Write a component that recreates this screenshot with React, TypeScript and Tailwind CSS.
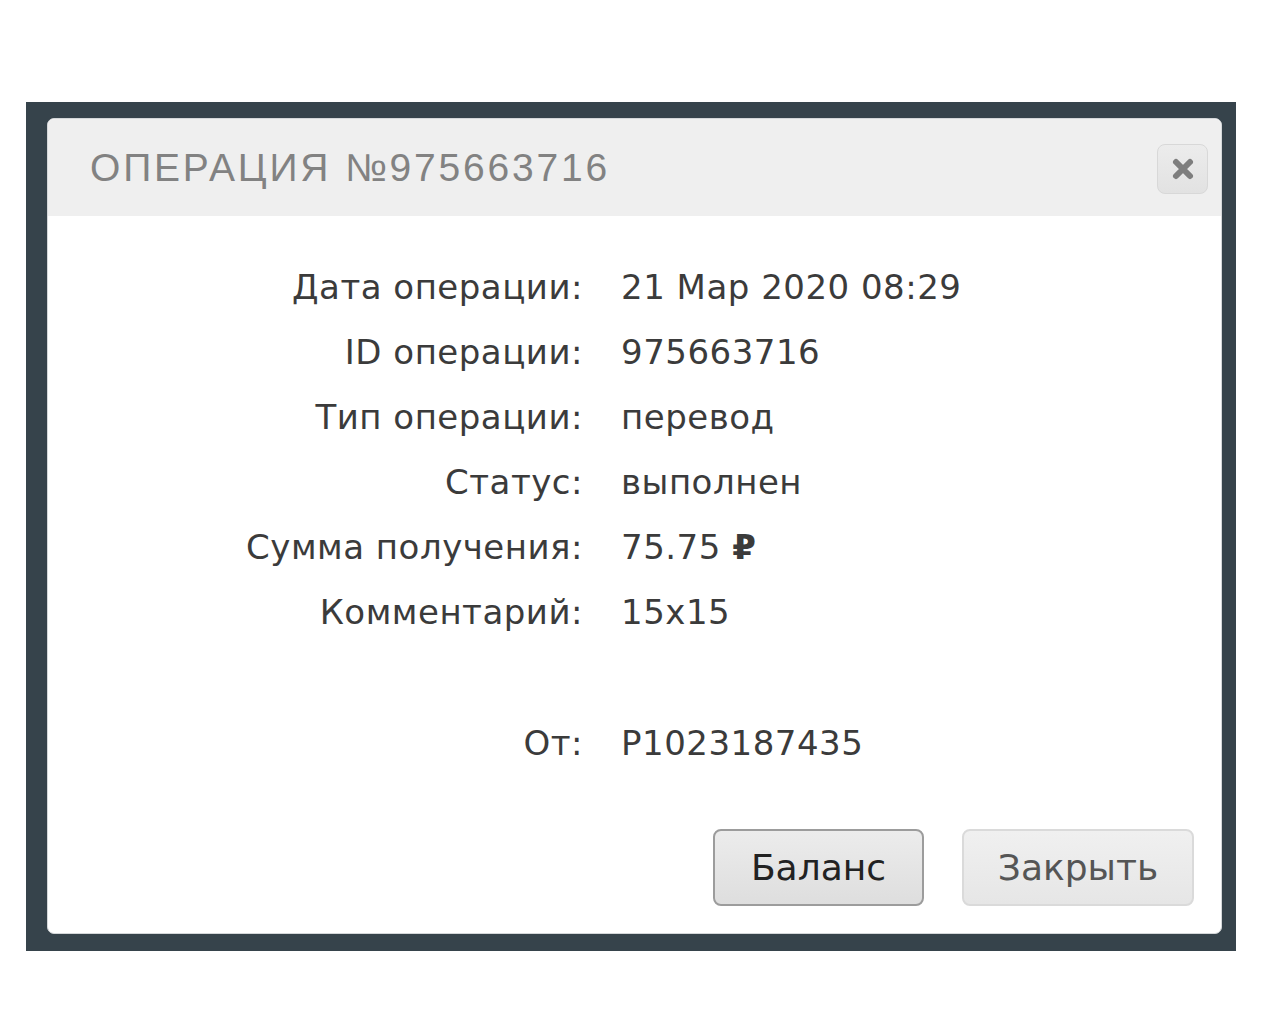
import React from "react"

const rows: [string, React.ReactNode][] = [
  ["Дата операции:", "21 Мар 2020 08:29"],
  ["ID операции:", "975663716"],
  ["Тип операции:", "перевод"],
  ["Статус:", "выполнен"],
  ["Сумма получения:", <>75.75 <span className="font-bold">₽</span></>],
  ["Комментарий:", "15x15"],
]

export default function App() {
  return (
    <div className="min-h-[1024px] w-[1280px] bg-white pt-[102px]">
      <div className="ml-[26px] w-[1210px] h-[849px] bg-[#36434b] pt-[16px] pl-[21px]">
        <div className="w-[1175px] h-[816px] bg-white rounded-[7px] border border-[#d4d7d9] overflow-hidden flex flex-col">
          <div className="h-[97px] bg-[#efefef] flex items-center justify-between pl-[42px] pr-[13px]">
            <h1
              className="text-[39px] tracking-[2.8px] text-[#828282] pt-[2px]"
              style={{ fontFamily: "'Liberation Sans', sans-serif" }}
            >
              ОПЕРАЦИЯ №975663716
            </h1>
            <button className="w-[51px] h-[50px] mt-[2px] rounded-[8px] border border-[#d8d8d8] bg-gradient-to-b from-[#ececec] to-[#e2e2e2] flex items-center justify-center">
              <svg width="24" height="24" viewBox="0 0 24 24">
                <path d="M5 5 L19 19 M19 5 L5 19" stroke="#7e7e7e" strokeWidth="6" strokeLinecap="round" />
              </svg>
            </button>
          </div>

          <div
            className="flex-1 flex flex-col text-[34px] tracking-[0.5px] text-[#3b3b3b]"
            style={{ fontFamily: "'DejaVu Sans', sans-serif" }}
          >
            <div className="pt-[39px] flex flex-col">
              {rows.map(([k, v]) => (
                <div key={k} className="flex h-[65px] items-center">
                  <div className="w-[535px] text-right">{k}</div>
                  <div className="pl-[38px]">{v}</div>
                </div>
              ))}
              <div className="flex h-[65px] items-center mt-[66px]">
                <div className="w-[535px] text-right">От:</div>
                <div className="pl-[38px]">P1023187435</div>
              </div>
            </div>

            <div className="mt-auto mb-[27px] flex justify-end gap-[38px] pr-[27px] text-[36px] tracking-normal">
              <button className="w-[211px] h-[77px] rounded-[8px] border-2 border-[#9c9c9c] bg-gradient-to-b from-[#ececec] to-[#dedede] text-[#222]">
                Баланс
              </button>
              <button className="w-[232px] h-[77px] rounded-[8px] border-2 border-[#dadada] bg-gradient-to-b from-[#f0f0f0] to-[#e6e6e6] text-[#555]">
                Закрыть
              </button>
            </div>
          </div>
        </div>
      </div>
    </div>
  )
}
